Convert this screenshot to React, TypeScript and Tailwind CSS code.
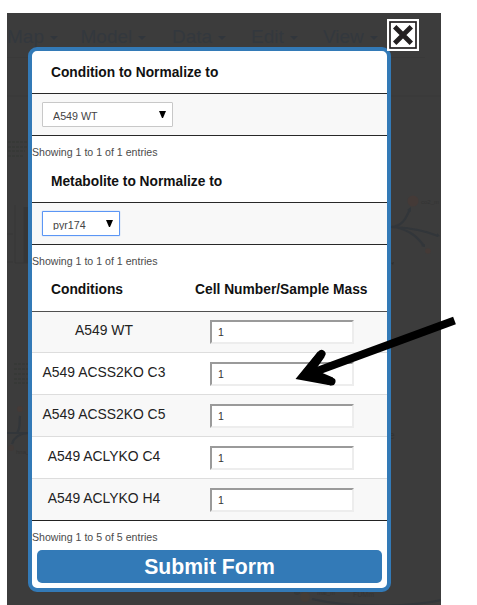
import React from "react";

const menus = [
  { label: "Map", width: "w-[73.5px]" },
  { label: "Model", width: "w-[91.5px]" },
  { label: "Data", width: "w-[79px]" },
  { label: "Edit", width: "w-[72px]" },
  { label: "View", width: "w-[70px]" },
];

const conditions = ["A549 WT", "A549 ACSS2KO C3", "A549 ACSS2KO C5", "A549 ACLYKO C4", "A549 ACLYKO H4"];

function MenuBar() {
  return (
    <nav className="flex h-[45px] items-start pt-[12px] text-[19px] leading-[24px] text-[#33383e]">
      {menus.map((m) => (
        <div key={m.label} className={`flex shrink-0 items-center gap-[6px] ${m.width}`}>
          <span>{m.label}</span>
          <svg viewBox="0 0 8 4" className="mt-[2px] h-[4px] w-[8px]">
            <path d="M0 0H8L4 4Z" fill="#31363c" />
          </svg>
        </div>
      ))}
    </nav>
  );
}

function MapCanvas() {
  return (
    <svg className="absolute left-0 top-0 h-[605px] w-[441px]" viewBox="0 0 441 605" fill="none">
      <path d="M7 57.500H28M391 57.500H425M7 96H28M391 96H441" stroke="#393939" />
      <g stroke="#32363a" strokeWidth="2.200">
        <path d="M391 227C403 226 406 218 410 209M391 227C414 228 424 231 438 236M395 227C412 231 418 238 424 246" />
        <path d="M7 433H28M17 433C21 428 19 421 20 416M28 433C17 434 13 440 12 444" />
        <path d="M312 599C350 608 410 607 441 600" />
      </g>
      <path d="M407 210l4-3 0 5zM437 233l3 3-3 1zM421 246l4-2 0 3z" fill="#32363a" />
      <circle cx="413" cy="201" r="5.500" fill="#443a37" />
      <circle cx="428" cy="251" r="2.800" fill="#443a37" />
      <circle cx="20" cy="409" r="3" fill="#443a37" />
      <circle cx="11" cy="448" r="3" fill="#403a38" />
      <circle cx="305" cy="597" r="5" fill="#443c36" />
      <circle cx="297" cy="592" r="3" fill="#363838" />
      <path d="M15 205V263H28M24 207V263M7 234h6M7 262h6" stroke="#373737" />
      <path d="M24 207h4v56h-4z" fill="#363636" />
      <path d="M8 142h19M8 147h19M8 151h17M8 156h16M14 364h14M14 369h14M14 374h14M14 379h14M14 383h14" stroke="#373937" strokeWidth="2" strokeDasharray="3 1" />
      <g fill="#333333" fontSize="6">
        <text x="421" y="204">co2_m</text>
        <text x="16" y="454">hna_</text>
        <text x="317" y="595">mal_m</text>
        <text x="353" y="597" fontSize="7">FUMm</text>
        <text x="389" y="439" fontSize="10">e</text>
      </g>
      <path d="M391 263l3-1-1 3z" fill="#303030" />
    </svg>
  );
}

function SelectBox({ value, width, focused = false }: { value: string; width: string; focused?: boolean }) {
  return (
    <div
      className={`flex h-[25px] items-center justify-between rounded-[1px] border bg-white pl-[10px] pr-[6px] ${width} ${
        focused ? "border-[#5b96f5] shadow-[0_0_1px_#5b96f5]" : "border-[#c8c8c8]"
      }`}
    >
      <span className="h-[12px] overflow-hidden text-[10.7px] leading-[14px] text-[#444]">{value}</span>
      <svg viewBox="0 0 7 7" className="h-[7px] w-[7px]">
        <path d="M0 0H7L4 7H3Z" fill="black" />
      </svg>
    </div>
  );
}

function Info({ count }: { count: number }) {
  return (
    <p className="pt-[9px] pb-px text-[10.6px] leading-[14px] whitespace-nowrap text-[#4b4b4b]">
      Showing 1 to {count} of {count} entries
    </p>
  );
}

function SelectTable({ title, children }: { title: string; children: React.ReactNode }) {
  return (
    <section>
      <h2 className="h-[43px] border-b border-[#282828] pt-[14px] pl-[19px] text-[13.75px] leading-[16px] font-bold whitespace-nowrap text-[#111]">
        {title}
      </h2>
      <div className="h-[42px] border-b border-[#282828] bg-[#f8f8f8] pl-[10px] pt-[8px]">{children}</div>
    </section>
  );
}

function ConditionsTable() {
  return (
    <section className="text-[13.9px] leading-[16px] text-[#222]">
      <div className="flex h-[43px] border-b border-[#505050] pt-[13px] text-[13.8px] font-bold whitespace-nowrap text-[#111]">
        <span className="w-[163px] pl-[19px]">Conditions</span>
        <span>Cell Number/Sample Mass</span>
      </div>
      {conditions.map((name, i) => (
        <div
          key={name}
          className={`flex border-b ${i % 2 === 0 ? "bg-[#f8f8f8]" : "bg-white"} ${
            i === 0 ? "h-[41px] pt-[8px]" : "h-[42px] pt-[9px]"
          } ${i === conditions.length - 1 ? "border-[#222]" : "border-[#dddddd]"}`}
        >
          <span className="w-[144px] pt-[2px] text-center whitespace-nowrap">{name}</span>
          <input
            className="ml-[34px] h-[24px] w-[144px] border-2 border-t-[#9a9a9a] border-r-[#ededed] border-b-[#ededed] border-l-[#9a9a9a] bg-white pl-[6px] text-[10.5px] text-[#333]"
            defaultValue="1"
          />
        </div>
      ))}
    </section>
  );
}

export default function App() {
  return (
    <div className="relative h-[605px] w-[477px] overflow-hidden bg-white pl-[7px] pt-[13px] font-['Liberation_Sans',Arial,sans-serif]">
      <div className="h-[592px] w-[434px] overflow-hidden bg-[#3c3c3c]">
        <MenuBar />
      </div>
      <MapCanvas />

      <main className="absolute left-[28px] top-[47px] h-[545px] w-[363px] rounded-[9px] border-4 border-[#337ab7] bg-white">
        <SelectTable title="Condition to Normalize to">
          <SelectBox value="A549 WT" width="w-[131px]" />
        </SelectTable>
        <Info count={1} />
        <SelectTable title="Metabolite to Normalize to">
          <SelectBox value="pyr174" width="w-[78px]" focused />
        </SelectTable>
        <Info count={1} />
        <ConditionsTable />
        <Info count={5} />
        <button className="mt-[5px] ml-[5px] flex h-[33px] w-[345px] items-center justify-center rounded-[5px] bg-[#337ab7] text-[21.2px] font-bold text-white">
          Submit Form
        </button>
      </main>

      <button aria-label="Close" className="absolute left-[387px] top-[19px] h-[32px] w-[32px] bg-white p-[2px]">
        <svg viewBox="0 0 28 28" className="h-[28px] w-[28px]">
          <rect x="1" y="1" width="26" height="26" fill="white" stroke="#231f20" strokeWidth="1.700" />
          <path d="M5.700 5.700L22.300 22.300M22.300 5.700L5.700 22.300" stroke="#231f20" strokeWidth="4.800" strokeLinecap="butt" />
        </svg>
      </button>

      <svg className="pointer-events-none absolute left-0 top-0 h-[605px] w-[477px]" viewBox="0 0 477 605" fill="none">
        <path d="M454.500 320.500L309 374" stroke="black" strokeWidth="8" />
        <path d="M321.500 354L306 373.500L331.500 381.500" stroke="black" strokeWidth="8" strokeLinecap="round" />
        <path d="M295.500 379L318 351.500L324.500 357L315.500 370L333 377.500L331 385.500Z" fill="black" />
      </svg>
    </div>
  );
}
